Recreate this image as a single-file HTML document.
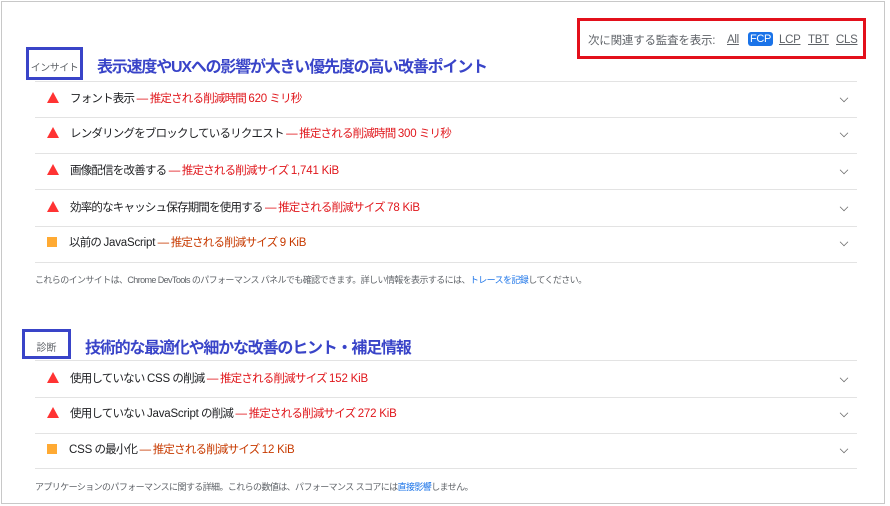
<!DOCTYPE html>
<html><head><meta charset="utf-8"><style>
*{margin:0;padding:0;box-sizing:border-box}
body{width:890px;height:506px;background:#fff;font-family:"Liberation Sans","Noto Sans CJK JP",sans-serif;position:relative;overflow:hidden;color:#202124}
.frame{position:absolute;left:1px;top:1px;width:884px;height:503px;border:1px solid #c8c8c8}
.abs{position:absolute;white-space:nowrap}
.hl{position:absolute;left:35px;width:822px;height:1px;background:#e3e3e3}
.row{position:absolute;left:47px;font-size:11.5px;letter-spacing:-0.8px;line-height:16px;white-space:nowrap}
.l{letter-spacing:-0.2px}
.tri{display:inline-block;width:0;height:0;border-left:6px solid transparent;border-right:6px solid transparent;border-bottom:11px solid #f33;vertical-align:-1px;margin-right:11px}
.sq{display:inline-block;width:10px;height:10px;background:#fa3;vertical-align:-1px;margin-right:12px}
.r{color:#e0161b}.o{color:#c73a00}
.chev{position:absolute;left:840px;width:8px;height:8px;border-right:1.5px solid #666;border-bottom:1.5px solid #666;transform:rotate(45deg) scale(.75)}
.title{color:#3944c8;font-weight:bold;font-size:16px;letter-spacing:-1.2px}
.foot{font-size:9px;letter-spacing:-0.6px;color:#5f6368}
a{color:#1a73e8;text-decoration:none}
.lk{position:absolute;top:34px;font-size:11.5px;color:#5f6368;text-decoration:underline;letter-spacing:-0.3px}
</style></head><body>
<div class="frame"></div>

<div class="abs" style="left:577px;top:18px;width:289px;height:41px;border:3px solid #e3101b"></div>
<div class="abs" style="left:588px;top:32px;font-size:11.5px;letter-spacing:-0.2px;color:#5f6368">次に関連する監査を表示:</div>
<div class="lk" style="left:727px">All</div>
<div class="abs" style="left:748px;top:32px;width:25px;height:14px;font-size:11px;color:#fff;background:#1a73e8;border-radius:3px;line-height:14px;text-align:center;letter-spacing:-0.3px">FCP</div>
<div class="lk" style="left:779px">LCP</div>
<div class="lk" style="left:808px">TBT</div>
<div class="lk" style="left:836px">CLS</div>

<div class="abs" style="left:26px;top:47px;width:57px;height:33px;border:3px solid #3944c8;font-size:10px;color:#5f6368;padding-top:9px;text-align:center;letter-spacing:-0.5px">インサイト</div>
<div class="abs title" style="left:97px;top:53px">表示速度やUXへの影響が大きい優先度の高い改善ポイント</div>

<div class="hl" style="top:81px"></div>
<div class="row" style="top:91px"><span class="tri"></span>フォント表示 <span class="r">— 推定される削減時間 <span class="l">620</span> ミリ秒</span></div><div class="chev" style="top:94px"></div>
<div class="hl" style="top:117px"></div>
<div class="row" style="top:126px"><span class="tri"></span>レンダリングをブロックしているリクエスト <span class="r">— 推定される削減時間 <span class="l">300</span> ミリ秒</span></div><div class="chev" style="top:129px"></div>
<div class="hl" style="top:153px"></div>
<div class="row" style="top:163px"><span class="tri"></span>画像配信を改善する <span class="r">— 推定される削減サイズ <span class="l">1,741 KiB</span></span></div><div class="chev" style="top:166px"></div>
<div class="hl" style="top:189px"></div>
<div class="row" style="top:200px"><span class="tri"></span>効率的なキャッシュ保存期間を使用する <span class="r">— 推定される削減サイズ <span class="l">78 KiB</span></span></div><div class="chev" style="top:203px"></div>
<div class="hl" style="top:226px"></div>
<div class="row" style="top:235px"><span class="sq"></span>以前の <span class="l">JavaScript</span> <span class="o">— 推定される削減サイズ <span class="l">9 KiB</span></span></div><div class="chev" style="top:238px"></div>
<div class="hl" style="top:262px"></div>
<div class="abs foot" style="left:35px;top:273px">これらのインサイトは、Chrome DevTools のパフォーマンス パネルでも確認できます。詳しい情報を表示するには、<a>トレースを記録</a>してください。</div>

<div class="abs" style="left:22px;top:329px;width:49px;height:30px;border:3px solid #3944c8;font-size:10px;color:#5f6368;padding-top:7px;text-align:center">診断</div>
<div class="abs title" style="left:85px;top:334px">技術的な最適化や細かな改善のヒント・補足情報</div>

<div class="hl" style="top:360px"></div>
<div class="row" style="top:371px"><span class="tri"></span>使用していない <span class="l">CSS</span> の削減 <span class="r">— 推定される削減サイズ <span class="l">152 KiB</span></span></div><div class="chev" style="top:374px"></div>
<div class="hl" style="top:397px"></div>
<div class="row" style="top:406px"><span class="tri"></span>使用していない <span class="l">JavaScript</span> の削減 <span class="r">— 推定される削減サイズ <span class="l">272 KiB</span></span></div><div class="chev" style="top:409px"></div>
<div class="hl" style="top:433px"></div>
<div class="row" style="top:442px"><span class="sq"></span><span class="l">CSS</span> の最小化 <span class="o">— 推定される削減サイズ <span class="l">12 KiB</span></span></div><div class="chev" style="top:445px"></div>
<div class="hl" style="top:468px"></div>
<div class="abs foot" style="left:35px;top:480px">アプリケーションのパフォーマンスに関する詳細。これらの数値は、パフォーマンス スコアには<a>直接影響</a>しません。</div>
</body></html>
